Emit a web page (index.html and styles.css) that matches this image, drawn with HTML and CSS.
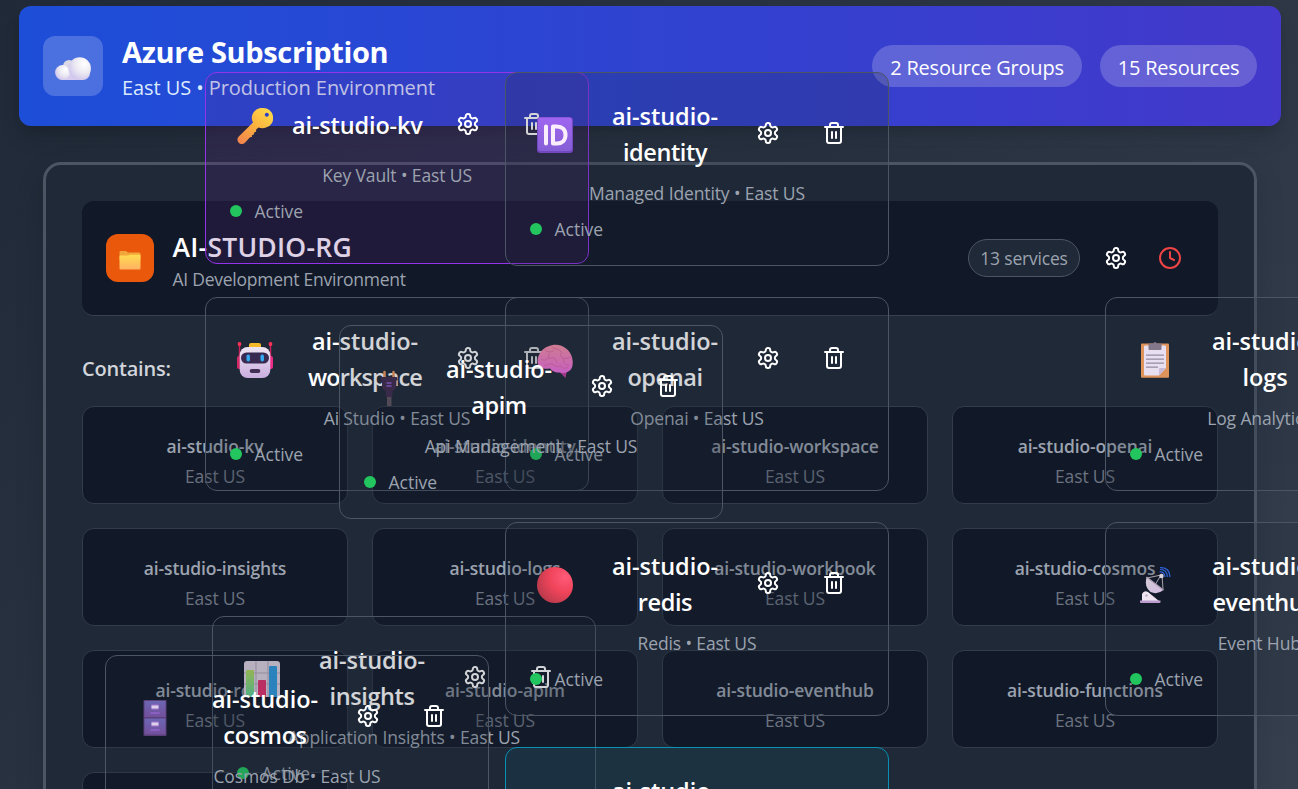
FILE: index.html
```html
<!DOCTYPE html>
<html lang="en">
<head>
<meta charset="utf-8">
<title>Azure Subscription</title>
<link rel="stylesheet" href="styles.css">
</head>
<body>
<svg class="defs" width="0" height="0" aria-hidden="true">
  <defs>
    <linearGradient id="gKey" x1="1" y1="0" x2="0" y2="1"><stop offset="0" stop-color="#ffe04a"/><stop offset=".5" stop-color="#fbb13f"/><stop offset="1" stop-color="#f17f4f"/></linearGradient>
    <linearGradient id="gId" x1="0" y1="0" x2="0" y2="1"><stop offset="0" stop-color="#a066f0"/><stop offset="1" stop-color="#855fd6"/></linearGradient>
    <linearGradient id="gBot" x1="0" y1="0" x2="0" y2="1"><stop offset="0" stop-color="#eee5f3"/><stop offset="1" stop-color="#c9aedf"/></linearGradient>
    <linearGradient id="gBrain" x1="0" y1="0" x2="0" y2="1"><stop offset="0" stop-color="#fb93a6"/><stop offset="1" stop-color="#f26ee6"/></linearGradient>
    <radialGradient id="gBall" cx=".78" cy=".28" r=".85"><stop offset="0" stop-color="#ff5a7a"/><stop offset=".5" stop-color="#f0445a"/><stop offset="1" stop-color="#b93a4c"/></radialGradient>
    <linearGradient id="gFolder" x1="0" y1="0" x2="0" y2="1"><stop offset="0" stop-color="#ffdc50"/><stop offset="1" stop-color="#ffb163"/></linearGradient>
    <radialGradient id="gCloud" cx=".7" cy=".3" r=".8"><stop offset="0" stop-color="#fff"/><stop offset=".5" stop-color="#eceaf2"/><stop offset="1" stop-color="#cdc3ec"/></radialGradient>
    <linearGradient id="gCab" x1="0" y1="0" x2="0" y2="1"><stop offset="0" stop-color="#6c66b4"/><stop offset="1" stop-color="#73509c"/></linearGradient>
    <linearGradient id="gGreen" x1="0" y1="0" x2="0" y2="1"><stop offset="0" stop-color="#b1d95a"/><stop offset="1" stop-color="#5fd198"/></linearGradient>
    <linearGradient id="gDish" x1="0" y1="0" x2="1" y2="1"><stop offset="0" stop-color="#d3cbd4"/><stop offset="1" stop-color="#d3bde4"/></linearGradient>
  </defs>
  <symbol id="gear" viewBox="0 0 24 24"><path d="M12.22 2h-.44a2 2 0 0 0-2 2v.18a2 2 0 0 1-1 1.73l-.43.25a2 2 0 0 1-2 0l-.15-.08a2 2 0 0 0-2.73.73l-.22.38a2 2 0 0 0 .73 2.73l.15.1a2 2 0 0 1 1 1.72v.51a2 2 0 0 1-1 1.74l-.15.09a2 2 0 0 0-.73 2.73l.22.38a2 2 0 0 0 2.73.73l.15-.08a2 2 0 0 1 2 0l.43.25a2 2 0 0 1 1 1.73V20a2 2 0 0 0 2 2h.44a2 2 0 0 0 2-2v-.18a2 2 0 0 1 1-1.73l.43-.25a2 2 0 0 1 2 0l.15.08a2 2 0 0 0 2.73-.73l.22-.39a2 2 0 0 0-.73-2.73l-.15-.08a2 2 0 0 1-1-1.74v-.5a2 2 0 0 1 1-1.74l.15-.09a2 2 0 0 0 .73-2.73l-.22-.38a2 2 0 0 0-2.73-.73l-.15.08a2 2 0 0 1-2 0l-.43-.25a2 2 0 0 1-1-1.73V4a2 2 0 0 0-2-2z"/><circle cx="12" cy="12" r="3"/></symbol>
  <symbol id="trash" viewBox="0 0 24 24"><path d="M3 6h18M19 6v14c0 1-1 2-2 2H7c-1 0-2-1-2-2V6M8 6V4c0-1 1-2 2-2h4c1 0 2 1 2 2v2M10 11v6M14 11v6"/></symbol>
  <symbol id="clock" viewBox="0 0 24 24"><circle cx="12" cy="12" r="10"/><path d="M12 6v6l4 2"/></symbol>
  <symbol id="e-key" viewBox="0 0 36 36"><path fill="url(#gKey)" fill-rule="evenodd" d="M26 0a10 10 0 0 1 3 19.600q-4 1.200-7.600-.2L19 21.800l.2 1.700-2.200 1.200.1 1.600-2.200.9.200 1.600-2.400.6-4.500 5.100a4.300 4.300 0 0 1-6.700-5.700L16 14.600A10 10 0 0 1 26 0zm3.800 4.800a2 2 0 1 0 .01 0z"/></symbol>
  <symbol id="e-id" viewBox="0 0 36 36"><rect width="36" height="36" rx="3.500" fill="#7447c0"/><rect x="1" y=".5" width="34" height="33.500" rx="3" fill="url(#gId)"/><path d="M9 9.500v17M16 9.500v17h4c5 0 8.500-3.300 8.500-8.500S25 9.500 20 9.500z" fill="none" stroke="#fbeefc" stroke-width="4" stroke-linecap="round" stroke-linejoin="round"/></symbol>
  <symbol id="e-robot" viewBox="0 0 36 36"><path d="M2.500 2v16M33.500 2v16" stroke="#c42459" stroke-width="1.500"/><circle cx="2.500" cy="2" r="1.900" fill="#ff3355"/><circle cx="33.500" cy="2" r="1.900" fill="#ff3355"/><rect y="14" width="6" height="13" rx="2" fill="#d12866"/><rect x="30" y="14" width="6" height="13" rx="2" fill="#ed2a86"/><rect x="12" y="1" width="12" height="7" rx="2" fill="#f9b928"/><rect x="2.700" y="5" width="30.600" height="31" rx="8" fill="url(#gBot)"/><rect x="4" y="10.500" width="28" height="11" rx="5.500" fill="#392a51"/><rect x="9.500" y="12.500" width="3.500" height="7" rx="1.700" fill="#34a8ef"/><rect x="23.500" y="12.500" width="3.500" height="7" rx="1.700" fill="#34a8ef"/><rect x="12.700" y="27" width="10.600" height="4" rx="2" fill="#402e54"/></symbol>
  <symbol id="e-brain" viewBox="0 -1.500 36 36"><path d="M23 27l4 1 2.500 1-1 5.500-5-5z" fill="#c43fa0"/><path d="M1 21C-1 14 4 5 11 3c6-3 14-2 18 2 6 4 8 13 6 19-3 6-9 6-13 5-5 0-7-2-9-4-5 1-11 0-12-4z" fill="url(#gBrain)"/><path d="M4 16c5 2 8-1 8-6M8 6c2 3 6 3 9 1M15 3c2 4 8 1 9 6M11 15c5-2 8 0 9 4M7 22c4 0 6-3 9-1s4 3 8 1M25 9c-3 3-1 6 3 6M28 15c3 0 4-2 6-1M27 15c-2 4 2 7 5 7M23 22c2 3 5 3 8 2" fill="none" stroke="#de66a2" stroke-width=".8"/></symbol>
  <symbol id="e-clip" viewBox="0 0 36 36"><rect x="4" y="1.500" width="28" height="34.300" rx="1" fill="#de945b"/><path d="M7 4.500q0-1 1-1h20q1 0 1 1V26l-7 7.500H8q-1 0-1-1z" fill="#e8e0f1"/><path d="M22 33.500V27q0-1 1-1h6z" fill="#c9bad8"/><path d="M11.500 1.500H16q2-3 4 0h4.500V7q0 1-1 1h-11q-1 0-1-1z" fill="#83778c"/><path d="M9.500 13.200h17M9.500 17.200h17M9.500 21.200h17M9.500 25.200h11" stroke="#958aa0" stroke-width="1.200" stroke-linecap="round"/></symbol>
  <symbol id="e-plug" viewBox="0 0 36 36"><path d="M13.500 8V2M22.500 8V2" stroke="#c68254" stroke-width="2.500" stroke-linecap="round"/><path d="M16 20h4.500v16H16z" fill="#534a58"/><path d="M10.500 7h15q1 0 1 1.500v2h-1V15q-1 5-4 6.500V27h-6.500v-5.500q-4-2-4-6.500v-4.500h-1.500v-2q0-1.500 1-1.500z" fill="#382a48"/><path d="M15.500 13h5M15.500 16h5" stroke="#7950b3" stroke-width="1.600"/></symbol>
  <symbol id="e-chart" viewBox="0 0 36 36"><rect width="36" height="36" rx="3" fill="#dcd2e2"/><path d="M0 12h36M0 23h36M12 0v36M24 0v36" stroke="#afa5b5" stroke-width="1"/><path fill="url(#gGreen)" d="M2 10q0-1 1-1h6q1 0 1 1v26H2z"/><path fill="#e2316e" d="M14 20q0-1 1-1h6q1 0 1 1v17h-8z"/><path fill="#2f9ae0" d="M25 6q0-1 1-1h6q1 0 1 1v31h-8z"/></symbol>
  <symbol id="e-cabinet" viewBox="0 0 36 36"><rect x="6.500" y="0" width="23" height="36" rx="1" fill="#5a3f79"/><rect x="7.500" y="1" width="21" height="16" fill="url(#gCab)"/><rect x="7.500" y="18.500" width="21" height="16" fill="url(#gCab)"/><path d="M14.500 7h7M14.500 24h7" stroke="#9f71cf" stroke-width="5"/><path d="M14.500 7h7M14.500 24h7" stroke="#ddd0e9" stroke-width="3"/><path d="M14 13h8M14 30h8" stroke="#9462ce" stroke-width="1.500" stroke-linecap="round"/></symbol>
  <symbol id="e-ball" viewBox="0 0 36 36"><circle cx="18" cy="18" r="18" fill="url(#gBall)"/></symbol>
  <symbol id="e-dish" viewBox="0 0 36 36"><path d="M10 11L24 8M25 8l1 14M24 8l-6 10" stroke="#aaa0ab" stroke-width="1"/><path d="M5 34V27q2-4 6-2l11 9z" fill="#eee5f1"/><path d="M3 33.500h20.500v1.500q0 1-1 1H4q-1 0-1-1z" fill="#bc9cce"/><path d="M9.500 10l17 13q-6 5-13 2Q7 20 9.500 10z" fill="url(#gDish)"/><path d="M9.500 10l17 13" stroke="#a99baf" stroke-width="1.300"/><circle cx="9.500" cy="28.500" r="1.200" fill="#b9afc5"/><circle cx="24.500" cy="9" r="2.200" fill="#d7cfdc"/><path d="M22.500 5q5-.5 5.500 5M23 2.500q7.300 0 7.300 7.500M23 .6q9.800-.4 9.800 9.400" fill="none" stroke="#2d62d6" stroke-width="1.200"/></symbol>
  <symbol id="e-bolt" viewBox="0 0 36 36"><path fill="url(#gKey)" d="M20 0L6 20h9l-4 16 19-22H20l6-14z"/></symbol>
</svg>

<main class="page">
  <header class="subscription">
    <div class="sub-icon"><svg width="36" height="36" viewBox="0 0 36 36"><circle cx="14" cy="18" r="6" fill="#dcd9e6"/><rect x="1" y="18" width="34" height="14" rx="7" fill="#d5ccef"/><circle cx="7.500" cy="24.500" r="7.400" fill="url(#gCloud)"/><circle cx="24.700" cy="20.500" r="11.200" fill="url(#gCloud)"/></svg></div>
    <div class="sub-text">
      <h1>Azure Subscription</h1>
      <p>East US • Production Environment</p>
    </div>
    <div class="sub-badges"><span class="pill"><b>2 Resource Groups</b></span><span class="pill pill-b"><b>15 Resources</b></span></div>
  </header>

  <section class="group">
    <div class="group-head">
      <div class="group-icon"><svg width="24" height="24" viewBox="0 0 24 24"><path d="M1.500 6q0-1 1-1H8l2 1.500H21q1.500 0 1.500 1.500V14h-21z" fill="#f3a63c"/><path d="M1.500 10.500q0-1 1-1H10l2-.8h9.500q1 0 1 1V22.500q0 1-1 1h-19q-1 0-1-1z" fill="url(#gFolder)"/></svg></div>
      <div class="group-text">
        <h2>AI-STUDIO-RG</h2>
        <p>AI Development Environment</p>
      </div>
      <span class="count">13 services</span>
      <svg class="ico head-gear"><use href="#gear"/></svg>
      <svg class="ico head-clock"><use href="#clock"/></svg>
    </div>
    <h3>Contains:</h3>
    <div class="grid">
      <div class="tile"><b>ai-studio-kv</b><span>East US</span></div>
      <div class="tile"><b>ai-studio-identity</b><span>East US</span></div>
      <div class="tile"><b>ai-studio-workspace</b><span>East US</span></div>
      <div class="tile"><b>ai-studio-openai</b><span>East US</span></div>
      <div class="tile"><b>ai-studio-insights</b><span>East US</span></div>
      <div class="tile"><b>ai-studio-logs</b><span>East US</span></div>
      <div class="tile"><b>ai-studio-workbook</b><span>East US</span></div>
      <div class="tile"><b>ai-studio-cosmos</b><span>East US</span></div>
      <div class="tile"><b>ai-studio-redis</b><span>East US</span></div>
      <div class="tile"><b>ai-studio-apim</b><span>East US</span></div>
      <div class="tile"><b>ai-studio-eventhub</b><span>East US</span></div>
      <div class="tile"><b>ai-studio-functions</b><span>East US</span></div>
      <div class="tile"></div>
    </div>
  </section>

  <article class="node node-kv"><div class="row"><svg class="emoji"><use href="#e-key"/></svg><h4>ai-studio-kv</h4><svg class="ico"><use href="#gear"/></svg><svg class="ico"><use href="#trash"/></svg></div><p>Key Vault • East US</p><div class="status"><i></i>Active</div></article>
  <article class="node node-identity"><div class="row"><svg class="emoji"><use href="#e-id"/></svg><h4>ai-studio-<br><span class="tight">identity</span></h4><svg class="ico"><use href="#gear"/></svg><svg class="ico"><use href="#trash"/></svg></div><p>Managed Identity • East US</p><div class="status"><i></i>Active</div></article>
  <article class="node node-workspace"><div class="row"><svg class="emoji"><use href="#e-robot"/></svg><h4>ai-studio-<br><span class="tight">workspace</span></h4><svg class="ico"><use href="#gear"/></svg><svg class="ico"><use href="#trash"/></svg></div><p>Ai Studio • East US</p><div class="status"><i></i>Active</div></article>
  <article class="node node-openai"><div class="row"><svg class="emoji"><use href="#e-brain"/></svg><h4>ai-studio-<br><span class="tight">openai</span></h4><svg class="ico"><use href="#gear"/></svg><svg class="ico"><use href="#trash"/></svg></div><p>Openai • East US</p><div class="status"><i></i>Active</div></article>
  <article class="node node-insights"><div class="row"><svg class="emoji"><use href="#e-chart"/></svg><h4>ai-studio-<br><span class="tight">insights</span></h4><svg class="ico"><use href="#gear"/></svg><svg class="ico"><use href="#trash"/></svg></div><p>Application Insights • East US</p><div class="status"><i></i>Active</div></article>
  <article class="node node-logs"><div class="row"><svg class="emoji"><use href="#e-clip"/></svg><h4>ai-studio-<br>logs</h4><svg class="ico"><use href="#gear"/></svg><svg class="ico"><use href="#trash"/></svg></div><p>Log Analytics • East US</p><div class="status"><i></i>Active</div></article>
  <article class="node node-cosmos"><div class="row"><svg class="emoji"><use href="#e-cabinet"/></svg><h4>ai-studio-<br><span class="tight">cosmos</span></h4><svg class="ico"><use href="#gear"/></svg><svg class="ico"><use href="#trash"/></svg></div><p>Cosmos Db • East US</p><div class="status"><i></i>Active</div></article>
  <article class="node node-redis"><div class="row"><svg class="emoji"><use href="#e-ball"/></svg><h4>ai-studio-<br><span class="tight">redis</span></h4><svg class="ico"><use href="#gear"/></svg><svg class="ico"><use href="#trash"/></svg></div><p>Redis • East US</p><div class="status"><i></i>Active</div></article>
  <article class="node node-apim"><div class="row"><svg class="emoji"><use href="#e-plug"/></svg><h4>ai-studio-<br><span class="tight">apim</span></h4><svg class="ico"><use href="#gear"/></svg><svg class="ico"><use href="#trash"/></svg></div><p>Api Management • East US</p><div class="status"><i></i>Active</div></article>
  <article class="node node-eventhub"><div class="row"><svg class="emoji"><use href="#e-dish"/></svg><h4>ai-studio-<br><span class="tight">eventhub</span></h4><svg class="ico"><use href="#gear"/></svg><svg class="ico"><use href="#trash"/></svg></div><p>Event Hub • East US</p><div class="status"><i></i>Active</div></article>
  <article class="node node-functions"><div class="row"><svg class="emoji"><use href="#e-bolt"/></svg><h4>ai-studio-<br>functions</h4><svg class="ico"><use href="#gear"/></svg><svg class="ico"><use href="#trash"/></svg></div><p>Functions • East US</p><div class="status"><i></i>Active</div></article>
</main>
</body>
</html>
```
FILE: styles.css
```css
* { box-sizing: border-box; }
html, body { height: 100%; }
body { margin: 0; overflow: hidden; background: #1f2937; font-family: "Open Sans", "Noto Sans", sans-serif; color: #fff; }
h1, h2, h3, h4, p { margin: 0; white-space: nowrap; }
.defs { position: absolute; }
.page { position: relative; height: 789px; overflow: hidden; padding: 6px 17px 0 19px; background: linear-gradient(135deg, #1f2937, #353f4e); }

.subscription { display: flex; align-items: center; height: 120px; padding: 0 24px; border-radius: 12px; background: linear-gradient(90deg, #1d4ed8, #4338ca); box-shadow: 0 15px 22px -4px rgba(0,0,0,.12), 0 6px 9px -3px rgba(0,0,0,.1); }
.sub-icon { display: grid; place-items: center; width: 60px; height: 60px; border-radius: 12px; background: rgba(255,255,255,.2); }
.sub-text { flex: 1; margin-left: 19px; padding-top: 6px; }
.sub-text h1 { font-size: 29px; line-height: 37px; font-weight: 700; letter-spacing: -.35px; }
.sub-text p { font-size: 20px; line-height: 36px; letter-spacing: -.08px; color: #dbeafe; }
.sub-badges { display: flex; gap: 18px; }
.pill { display: flex; align-items: center; justify-content: center; width: 210px; height: 42px; border-radius: 21px; background: rgba(255,255,255,.2); font-size: 20px; letter-spacing: -.2px; }
.pill-b { width: 157px; }
.pill b { font-weight: 400; padding-top: 2px; white-space: nowrap; }

.group { margin: 36px 24px 0; height: 760px; padding: 36px; border: 3px solid #4b5563; border-radius: 18px; background: #1f2937; box-shadow: 0 10px 30px rgba(0,0,0,.12); }
.group-head { display: flex; align-items: center; height: 115px; padding: 0 36px 0 24px; border-radius: 12px; border-bottom: 1px solid #374151; background: #111827; }
.group-icon { display: grid; place-items: center; width: 48px; height: 48px; border-radius: 12px; background: #ea580c; }
.group-text { flex: 1; margin-left: 18.500px; padding-top: 8px; }
.group-text h2 { font-size: 26.500px; line-height: 34px; font-weight: 600; letter-spacing: .25px; }
.group-text p { font-size: 17.500px; line-height: 30px; letter-spacing: -.25px; color: #9ca3af; }
.count { display: grid; place-items: center; width: 112px; height: 38px; border: 1px solid #4b5563; border-radius: 19px; background: #1f2937; color: #9ca3af; font-size: 17.500px; letter-spacing: -.2px; white-space: nowrap; }
.ico { width: 24px; height: 24px; flex: none; fill: none; stroke: #fff; stroke-width: 2; stroke-linecap: round; stroke-linejoin: round; }
.head-gear { margin-left: 24px; }
.head-clock { margin-left: 30px; stroke: #ef4444; }
.group h3 { margin: 37px 0 21px; font-size: 20px; line-height: 32px; font-weight: 600; letter-spacing: -.2px; color: #d1d5db; }
.grid { display: grid; grid-template-columns: repeat(4, 266px); grid-auto-rows: 98px; gap: 24px; }
.tile { display: flex; flex-direction: column; align-items: center; padding-top: 24px; border: 1px solid #323c4b; border-radius: 12px; background: #111827; font-size: 17.500px; line-height: 30px; letter-spacing: -.15px; white-space: nowrap; }
.tile b { font-weight: 600; color: #9ca3af; }
.tile span { color: #6b7280; }

.node { position: absolute; width: 384px; height: 194px; padding: 24px; border: 1px solid #4b5563; border-radius: 12px; background: rgba(31,41,55,.2); }
.row { display: flex; align-items: center; min-height: 54px; }
.emoji { width: 36px; height: 36px; flex: none; margin: 3px 19px 0 7px; }
.row h4 { width: 146px; padding-top: 1px; margin-bottom: -1px; font-size: 23.500px; line-height: 36px; font-weight: 600; letter-spacing: -.05px; text-align: center; }
.tight { letter-spacing: -.4px; }
.node-workspace .tight { letter-spacing: -.9px; }
.node-kv h4 { text-align: left; letter-spacing: -.15px; }
.row .ico { margin-left: 18px; }
.row .ico + .ico { margin-left: 42px; }
.node p { margin: 11px -20px 0; line-height: 27px; font-size: 17.500px; letter-spacing: -.12px; text-align: center; color: #9ca3af; }
.status { display: flex; align-items: center; gap: 12.500px; margin-top: 9px; height: 25px; font-size: 17.500px; letter-spacing: 0; color: #9ca3af; }
.status i { width: 12px; height: 12px; border-radius: 50%; background: #22c55e; }
.node-kv { left: 205px; top: 72px; height: 192px; border-color: #9333ea; background: rgba(88,28,135,.2); }
.node-identity { left: 505px; top: 72px; }
.node-workspace { left: 205px; top: 297px; }
.node-openai { left: 505px; top: 297px; }
.node-insights { left: 212px; top: 616px; }
.node-logs { left: 1105px; top: 297px; }
.node-cosmos { left: 105px; top: 655px; }
.node-redis { left: 505px; top: 522px; }
.node-apim { left: 339px; top: 325px; }
.node-eventhub { left: 1105px; top: 522px; }
.node-functions { left: 505px; top: 747px; border-color: #0891b2; background: rgba(22,78,99,.24); }
```
